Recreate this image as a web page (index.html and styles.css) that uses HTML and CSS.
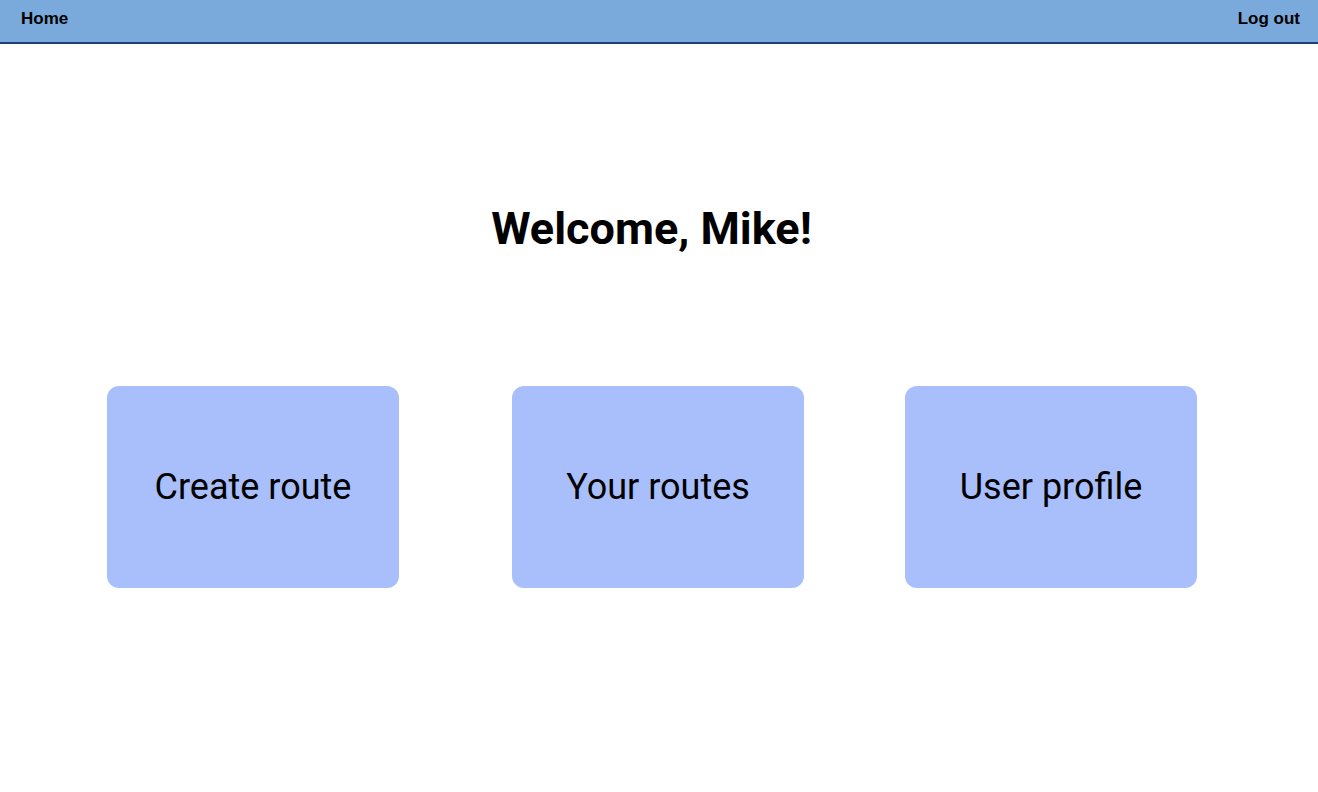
FILE: index.html
```html
<!DOCTYPE html>
<html lang="en">
<head>
<meta charset="utf-8">
<title>Home</title>
<link rel="stylesheet" href="styles.css">
</head>
<body>
<header class="topbar">
  <a class="topbar-link" href="#">Home</a>
  <a class="topbar-link" href="#">Log out</a>
</header>
<main class="main">
  <h1 class="welcome">Welcome, Mike!</h1>
  <div class="cards">
    <a class="card" href="#">Create route</a>
    <a class="card card-middle" href="#">Your routes</a>
    <a class="card" href="#">User profile</a>
  </div>
</main>
</body>
</html>
```
FILE: styles.css
```css
html, body {
  margin: 0;
  padding: 0;
  background: #ffffff;
}
body {
  font-family: Roboto, "Liberation Sans", sans-serif;
  color: #000;
}
.topbar {
  height: 42px;
  background: #7aaadc;
  border-bottom: 2px solid #1e3f78;
  display: flex;
  align-items: center;
  justify-content: space-between;
  padding: 0 18px 0 21px;
}
.topbar-link {
  font-family: "Liberation Sans", Arial, sans-serif;
  font-weight: bold;
  font-size: 17px;
  color: #000;
  text-decoration: none;
  padding-bottom: 5px;
}
.main {
  padding-top: 158px;
}
.welcome {
  margin: 0 15px 0 0;
  font-size: 45px;
  line-height: 53px;
  font-weight: 700;
  text-align: center;
}
.cards {
  margin-top: 131px;
  display: flex;
  padding-left: 107px;
}
.card {
  flex: 0 0 292px;
  width: 292px;
  height: 202px;
  background: #a8bffc;
  border-radius: 12px;
  display: flex;
  align-items: center;
  justify-content: center;
  font-size: 36px;
  color: #000;
  text-decoration: none;
}
.card-middle {
  margin: 0 101px 0 113px;
}
```
